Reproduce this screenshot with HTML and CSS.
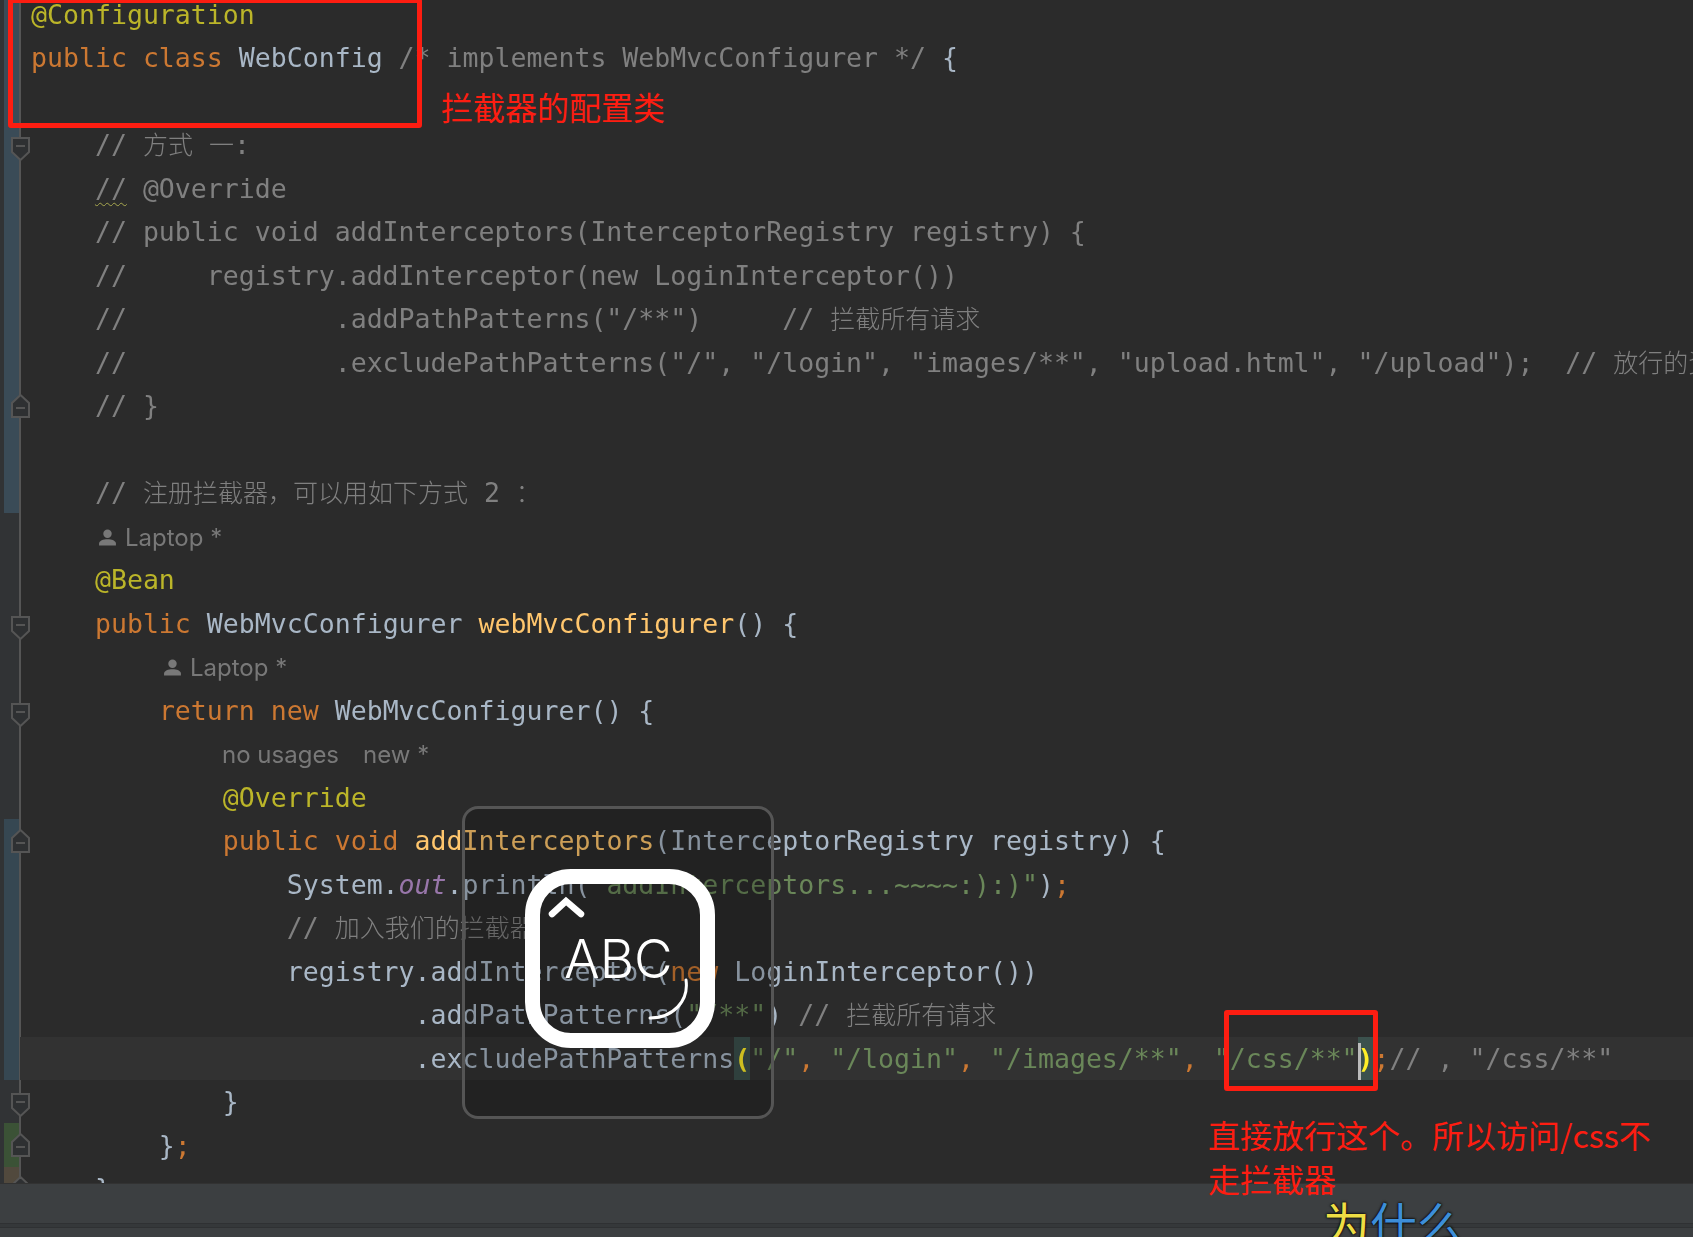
FILE: index.html
```html
<!DOCTYPE html>
<html lang="zh-CN">
<head>
<meta charset="utf-8">
<title>WebConfig</title>
<link rel="stylesheet" href="styles.css">
</head>
<body>
<svg class="defs" width="0" height="0" aria-hidden="true">
  <symbol id="fold-down" viewBox="0 0 19 24"><path d="M1 1H18V15L9.5 23L1 15Z" fill="#2e3032" stroke="#555" stroke-width="2"/><path d="M5 9H14" stroke="#555" stroke-width="2"/></symbol>
  <symbol id="fold-up" viewBox="0 0 19 24"><path d="M1 23H18V9L9.5 1L1 9Z" fill="#2e3032" stroke="#555" stroke-width="2"/><path d="M5 14H14" stroke="#555" stroke-width="2"/></symbol>
  <symbol id="person" viewBox="0 0 18 16"><circle cx="9" cy="4.4" r="4" fill="#787878"/><path d="M1 15.5V13.6C1 11 5 9.6 9 9.6S17 11 17 13.6V15.5Z" fill="#787878"/></symbol>
</svg>
<div class="screen">
  <main class="editor">
    <aside class="gutter">
      <div class="bar bar-a"></div>
      <div class="bar bar-b"></div>
      <div class="bar bar-c"></div>
      <div class="bar bar-d"></div>
      <div class="rail"></div>
      <svg class="fold f4"><use href="#fold-down"/></svg>
      <svg class="fold f10"><use href="#fold-up"/></svg>
      <svg class="fold f15"><use href="#fold-down"/></svg>
      <svg class="fold f17"><use href="#fold-down"/></svg>
      <svg class="fold f20"><use href="#fold-up"/></svg>
      <svg class="fold f26"><use href="#fold-down"/></svg>
      <svg class="fold f27"><use href="#fold-up"/></svg>
      <svg class="fold f28"><use href="#fold-up"/></svg>
    </aside>
    <div class="code">
      <div class="line"><span class="an">@Configuration</span></div>
      <div class="line"><span class="kw">public class</span> WebConfig <span class="cm">/* implements WebMvcConfigurer */</span> {</div>
      <div class="line"></div>
      <div class="line cm">    // <span class="cjk">方式</span> <span class="cjk">一</span>:</div>
      <div class="line cm">    <span class="wavy">//</span> @Override</div>
      <div class="line cm">    // public void addInterceptors(InterceptorRegistry registry) {</div>
      <div class="line cm">    //     registry.addInterceptor(new LoginInterceptor())</div>
      <div class="line cm">    //             .addPathPatterns("/**")     // <span class="cjk">拦截所有请求</span></div>
      <div class="line cm">    //             .excludePathPatterns("/", "/login", "images/**", "upload.html", "/upload");  // <span class="cjk">放行的资源</span></div>
      <div class="line cm">    // }</div>
      <div class="line"></div>
      <div class="line cm">    // <span class="cjk">注册拦截器，可以用如下方式</span> 2 <span class="cjk">：</span></div>
      <div class="line hint hint-4"><svg class="person"><use href="#person"/></svg>Laptop *</div>
      <div class="line">    <span class="an">@Bean</span></div>
      <div class="line">    <span class="kw">public</span> WebMvcConfigurer <span class="fn">webMvcConfigurer</span>() {</div>
      <div class="line hint hint-8"><svg class="person"><use href="#person"/></svg>Laptop *</div>
      <div class="line">        <span class="kw">return new</span> WebMvcConfigurer() {</div>
      <div class="line hint hint-12"><span class="usages">no usages</span>new *</div>
      <div class="line">            <span class="an">@Override</span></div>
      <div class="line">            <span class="kw">public void</span> <span class="fn">addInterceptors</span>(InterceptorRegistry registry) {</div>
      <div class="line">                System.<span class="field">out</span>.println(<span class="str">"addInterceptors...~~~~:):)"</span>)<span class="kw">;</span></div>
      <div class="line cm">                // <span class="cjk">加入我们的拦截器</span></div>
      <div class="line">                registry.addInterceptor(<span class="kw">new</span> LoginInterceptor())</div>
      <div class="line">                        .addPathPatterns(<span class="str">"/**"</span>) <span class="cm">// <span class="cjk">拦截所有请求</span></span></div>
      <div class="line current">                        .excludePathPatterns<span class="match">(</span><span class="str">"/"</span><span class="kw">,</span> <span class="str">"/login"</span><span class="kw">,</span> <span class="str">"/images/**"</span><span class="kw">,</span> <span class="str">"/css/**"</span><span class="match caret">)</span><span class="kw">;</span><span class="cm">// , "/css/**"</span></div>
      <div class="line">            }</div>
      <div class="line">        }<span class="kw">;</span></div>
      <div class="line">    }</div>
    </div>
    <div class="osd">
      <div class="osd-ring"></div>
      <svg class="osd-marks" viewBox="0 0 190 180" fill="none" stroke="#fff" stroke-linecap="round">
        <path d="M27 45L41 32L56 45" stroke-width="6.5"/>
        <path d="M125 149C148 149 164 132 161 111" stroke-width="3"/>
      </svg>
      <span class="osd-abc">ABC</span>
    </div>
  </main>
  <footer class="panel">
    <div class="panel-rule"></div>
  </footer>
  <div class="box box-a"></div>
  <div class="box box-b"></div>
  <p class="note note-a">拦截器的配置类</p>
  <p class="note note-b">直接放行这个。所以访问/css不<br>走拦截器</p>
  <p class="subtitle"><span class="sub-y">为</span><span class="sub-b">什么</span></p>
</div>
</body>
</html>
```
FILE: styles.css
```css
* { box-sizing: border-box; }
html, body { margin: 0; padding: 0; background: #2b2b2b; }
.defs { position: absolute; }
.screen {
  position: relative;
  width: 1693px;
  height: 1237px;
  display: flex;
  flex-direction: column;
  overflow: hidden;
}
.editor {
  position: relative;
  flex: 1;
  display: flex;
  min-height: 0;
  overflow: hidden;
  background: #2b2b2b;
}
.gutter {
  position: relative;
  flex: 0 0 20px;
  background: #313335;
}
.bar { position: absolute; left: 4px; width: 15px; }
.bar-a { top: 0; height: 513px; background: #3a4b57; }
.bar-b { top: 819px; height: 261px; background: #364752; }
.bar-c { top: 1123px; height: 44px; background: #3b5236; }
.bar-d { top: 1167px; height: 16px; background: #51493d; }
.rail { position: absolute; left: 19px; top: 0; bottom: 0; width: 2px; background: #555; }
.fold { position: absolute; left: 11px; width: 19px; height: 24px; }
.f4 { top: 137px; }
.f10 { top: 394px; }
.f15 { top: 616px; }
.f17 { top: 703px; }
.f20 { top: 829px; }
.f26 { top: 1093px; }
.f27 { top: 1133px; }
.f28 { top: 1176px; }
.code {
  flex: 1;
  min-width: 0;
  margin-top: -7.5px;
  font-family: "DejaVu Sans Mono", "Liberation Mono", monospace;
  font-size: 26.55px;
  color: #a9b7c6;
  filter: blur(0.3px);
}
.line {
  height: 43.5px;
  line-height: 43.5px;
  padding-left: 11px;
  white-space: pre;
  overflow: visible;
}
.an { color: #bbb529; }
.kw { color: #cc7832; }
.cm { color: #808080; }
.fn { color: #ffc66d; }
.str { color: #6a8759; }
.field { color: #9876aa; font-style: italic; }
.cjk {
  font-family: "Noto Sans CJK SC", sans-serif;
  font-size: 25px;
  font-weight: 300;
  line-height: 1;
}
.wavy {
  text-decoration: underline wavy #a8a850 1px;
  text-underline-offset: 4px;
}
.current { background: #323232; }
.match { display: inline-block; background: #3b514d; color: #ffef28; font-weight: 700; }
.caret { position: relative; }
.caret::before {
  content: "";
  position: absolute;
  left: 0;
  top: 6px;
  bottom: 0;
  width: 3px;
  background: #bbb;
}
.hint {
  font-family: "Inter", "Noto Sans", sans-serif;
  font-size: 24px;
  color: #787878;
  display: flex;
  align-items: center;
  padding-top: 2px;
}
.hint-4 { padding-left: 78px; }
.hint-8 { padding-left: 143px; }
.hint-12 { padding-left: 202px; }
.person { width: 19px; height: 17px; margin-right: 8px; }
.usages { margin-right: 24px; }
.osd {
  position: absolute;
  left: 462px;
  top: 806px;
  width: 312px;
  height: 313px;
  border: 3px solid #555;
  border-radius: 16px;
  background: rgba(0, 0, 0, 0.2);
}
.osd-ring {
  position: absolute;
  left: 60px;
  top: 60px;
  width: 190px;
  height: 179px;
  border: 15px solid #fff;
  border-radius: 46px;
}
.osd-marks {
  position: absolute;
  left: 60px;
  top: 60px;
  width: 190px;
  height: 180px;
}
.osd-abc {
  position: absolute;
  left: 99px;
  top: 120px;
  font-family: "Inter", "Liberation Sans", sans-serif;
  font-size: 53px;
  font-weight: 300;
  line-height: 60px;
  color: #fff;
}
.panel {
  position: relative;
  flex: 0 0 54px;
  background: #3c3f41;
  border-top: 1px solid #323232;
}
.panel-rule {
  margin-top: 39px;
  height: 5px;
  border-top: 1px solid #2f3133;
  background: #35383a;
  border-bottom: 1px solid #2f3133;
}
.box {
  position: absolute;
  border: 5px solid #fd1d11;
  border-radius: 3px;
  pointer-events: none;
}
.box-a { left: 8px; top: -2px; width: 414px; height: 130px; }
.box-b { left: 1224px; top: 1010px; width: 154px; height: 81px; }
.note {
  position: absolute;
  margin: 0;
  font-family: "Noto Sans CJK SC", sans-serif;
  font-weight: 400;
  color: #fd1d11;
}
.note-a { left: 441px; top: 84px; font-size: 32px; line-height: 44px; }
.note-b { left: 1208px; top: 1112px; width: 470px; font-size: 32px; line-height: 44px; }
.subtitle {
  position: absolute;
  margin: 0;
  left: 1323px;
  top: 1192px;
  font-family: "Noto Sans CJK SC", sans-serif;
  font-size: 47px;
  line-height: 60px;
  white-space: nowrap;
  text-shadow: 0 0 3px #000, 0 0 2px #000;
}
.sub-y { color: #eedd44; }
.sub-b { color: #3d8ed8; }
```
